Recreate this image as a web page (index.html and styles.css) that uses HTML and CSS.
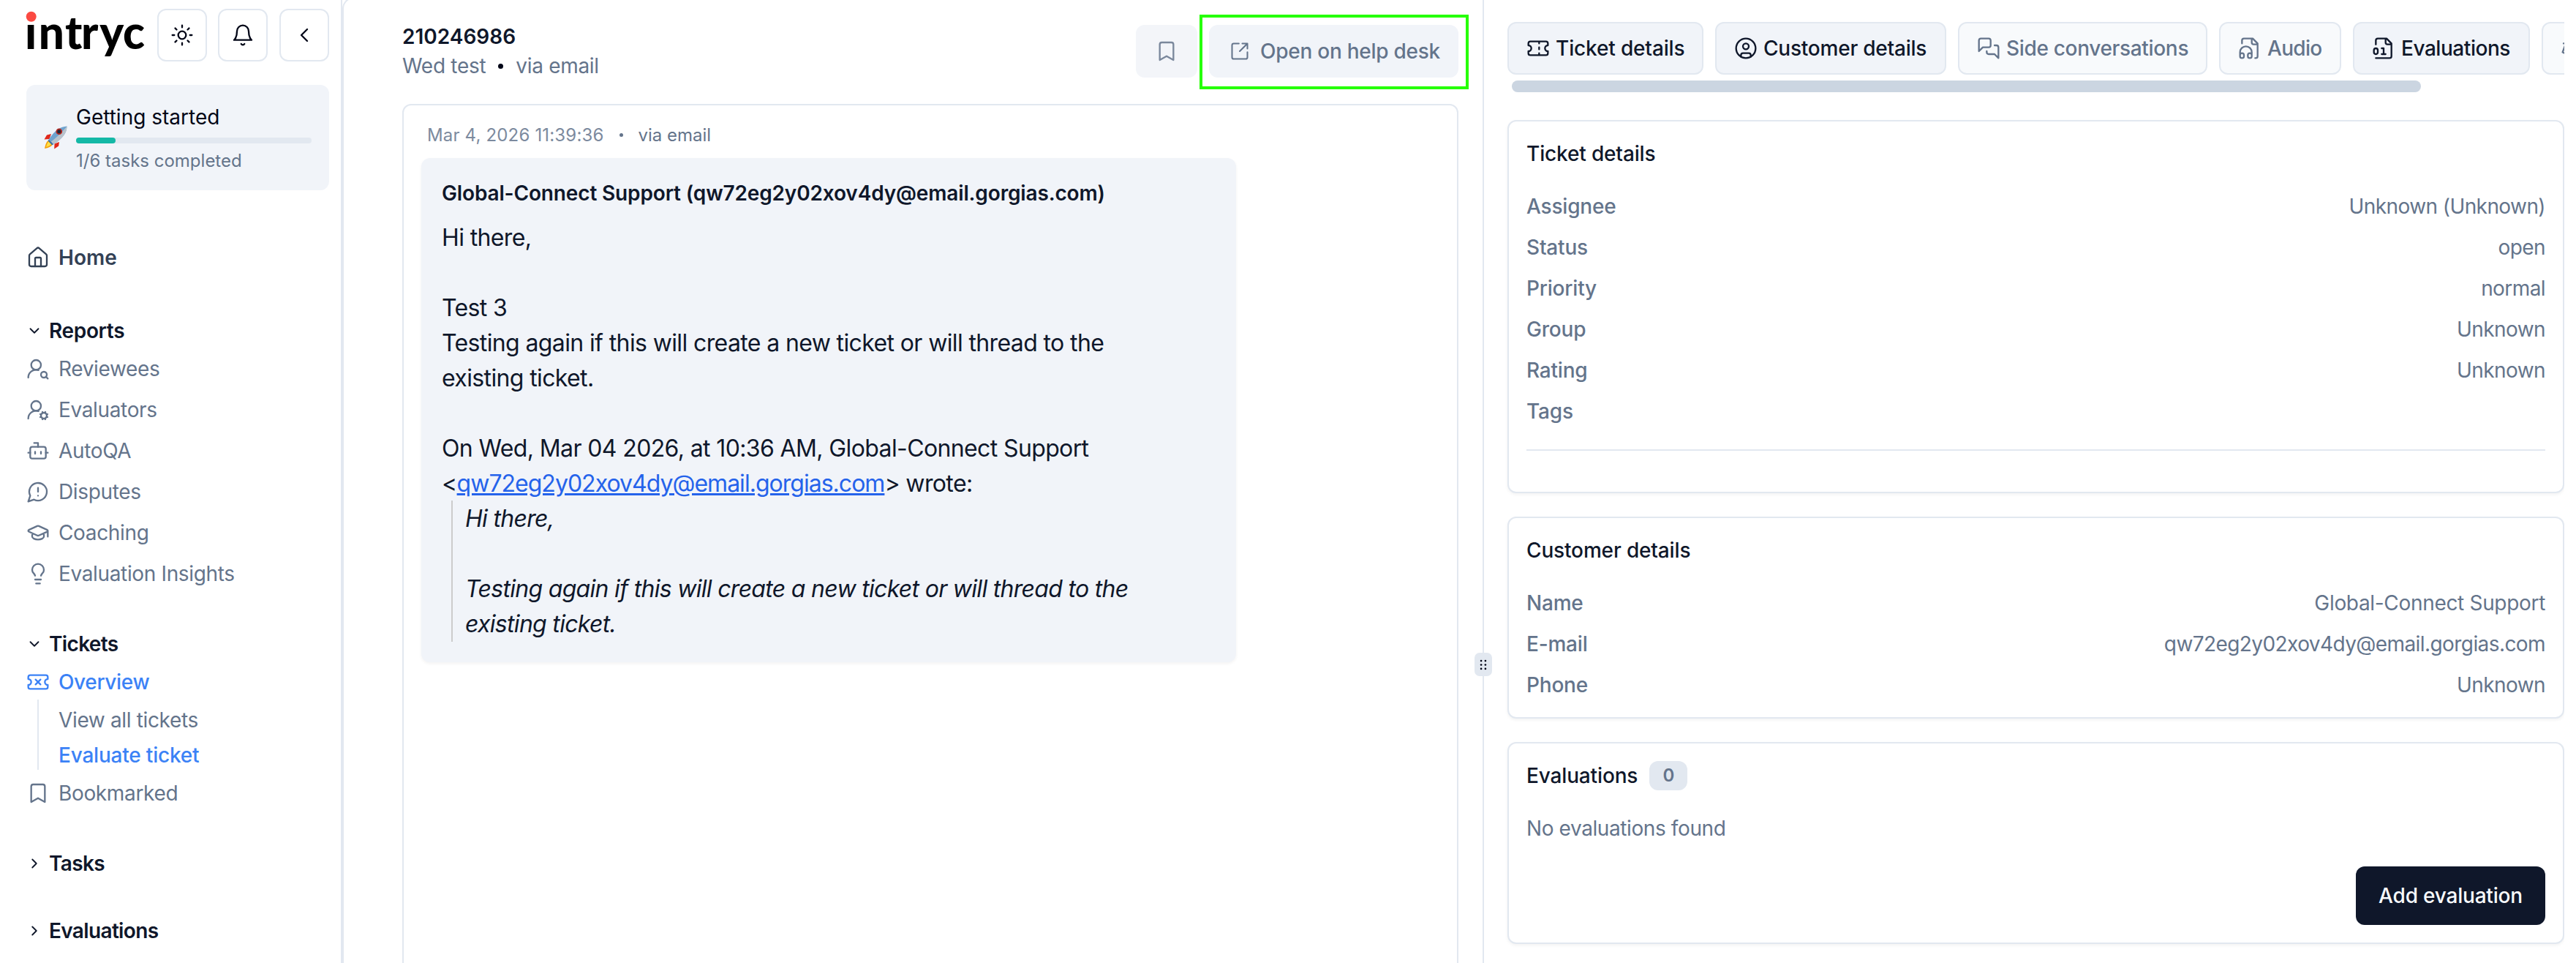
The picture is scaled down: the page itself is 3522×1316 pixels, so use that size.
FILE: index.html
```html
<!DOCTYPE html>
<html lang="en">
<head>
<meta charset="utf-8">
<title>intryc – Evaluate ticket</title>
<link rel="stylesheet" href="styles.css">
</head>
<body>
<aside class="sidebar">
  <div class="brand-row">
    <svg class="logo" viewBox="0 0 164 72" role="img" aria-label="intryc">
      <circle cx="6.7" cy="10.7" r="7" fill="#fb4a42"/>
      <text class="logo-text" x="-1.900 16.700 53 75 100.300 132" y="54.7">ıntryc</text>
    </svg>
    <div class="brand-actions">
      <button class="icon-btn" aria-label="Theme"><svg class="icon" viewBox="0 0 24 24"><circle cx="12" cy="12" r="4"/><path d="M12 2v2M12 20v2M4.93 4.93l1.41 1.41M17.66 17.66l1.41 1.41M2 12h2M20 12h2M6.34 17.66l-1.41 1.41M19.07 4.93l-1.41 1.41"/></svg></button>
      <button class="icon-btn" aria-label="Notifications"><svg class="icon" viewBox="0 0 24 24"><path d="M6 8a6 6 0 0 1 12 0c0 7 3 9 3 9H3s3-2 3-9M10.3 21a1.94 1.94 0 0 0 3.4 0"/></svg></button>
      <button class="icon-btn collapse" aria-label="Collapse"><svg class="icon" viewBox="0 0 24 24"><path d="m15 18-6-6 6-6"/></svg></button>
    </div>
  </div>

  <div class="onboarding">
    <svg class="rocket" viewBox="0 0 32 32">
      <path d="M10 11 4 12.5.5 18.5l7-.5zM21 22l-.8 5.500-6 4 .3-7z" fill="#e0281b"/>
      <path d="M6 20c-3 2-4 6-5 11 5-1 9-2.500 11-5.500z" fill="#f59e0b"/>
      <path d="M6.500 21.500c-2 2-2.600 4.500-3.500 7.500 3.200-.8 5.500-2 7.200-4z" fill="#fde047"/>
      <path d="M31.500.5C23 1 14.500 6 6.800 18.500l6.400 6.800C25 18 31.500 9.500 31.500.5z" fill="#6fa3cf"/>
      <path d="M31.500.5C27 6 19 15 9.800 21.700l3.400 3.600C25 18 31.500 9.500 31.500.5z" fill="#b9c3cc"/>
      <path d="M6.800 18.500l6.400 6.800-2 .9-5.600-5.700z" fill="#3b6fa8"/>
      <circle cx="20.800" cy="7.800" r="4.300" fill="#b3261e"/>
      <circle cx="20.800" cy="7.800" r="2.500" fill="#1e293b"/>
    </svg>
    <div class="onboarding-body">
      <div class="onboarding-title">Getting started</div>
      <div class="progress"><div class="progress-fill"></div></div>
      <div class="onboarding-note">1/6 tasks completed</div>
    </div>
  </div>

  <nav class="nav">
    <a class="nav-item home"><svg class="icon" viewBox="0 0 24 24"><path d="M15 21v-8a1 1 0 0 0-1-1h-4a1 1 0 0 0-1 1v8"/><path d="M3 10a2 2 0 0 1 .709-1.528l7-5.999a2 2 0 0 1 2.582 0l7 5.999A2 2 0 0 1 21 10v9a2 2 0 0 1-2 2H5a2 2 0 0 1-2-2z"/></svg>Home</a>

    <section class="nav-group reports">
      <h2 class="nav-heading"><svg class="chevron" viewBox="0 0 24 24"><path d="m6 9 6 6 6-6"/></svg>Reports</h2>
      <div class="nav-list">
        <a class="nav-item"><svg class="icon" viewBox="0 0 24 24"><circle cx="10" cy="8" r="5"/><path d="M2 21a8 8 0 0 1 10.434-7.62"/><circle cx="18" cy="18" r="3"/><path d="m22 22-1.900-1.900"/></svg>Reviewees</a>
        <a class="nav-item"><svg class="icon" viewBox="0 0 24 24"><path d="M2 21a8 8 0 0 1 10.434-7.62"/><circle cx="10" cy="8" r="5"/><circle cx="18" cy="18" r="3"/><path d="m19.500 14.300-.4.9M16.900 20.800l-.4.9M21.700 19.500l-.9-.4M15.200 16.900l-.9-.4M21.700 16.500l-.9.4M15.200 19.100l-.9.4M19.500 21.700l-.4-.9M16.900 15.200l-.4-.9"/></svg>Evaluators</a>
        <a class="nav-item"><svg class="icon" viewBox="0 0 24 24"><path d="M12 8V4H8"/><rect width="16" height="12" x="4" y="8" rx="2"/><path d="M2 14h2M20 14h2M15 13v2M9 13v2"/></svg>AutoQA</a>
        <a class="nav-item"><svg class="icon" viewBox="0 0 24 24"><path d="M7.900 20A9 9 0 1 0 4 16.100L2 22ZM12 8v4M12 16h.01"/></svg>Disputes</a>
        <a class="nav-item"><svg class="icon" viewBox="0 0 24 24"><path d="M21.420 10.922a1 1 0 0 0-.019-1.838L12.830 5.180a2 2 0 0 0-1.660 0L2.600 9.080a1 1 0 0 0 0 1.832l8.570 3.908a2 2 0 0 0 1.660 0zM22 10v6M6 12.500V16a6 3 0 0 0 12 0v-3.500"/></svg>Coaching</a>
        <a class="nav-item"><svg class="icon" viewBox="0 0 24 24"><path d="M15 14c.2-1 .7-1.700 1.500-2.500 1-.9 1.500-2.200 1.500-3.500A6 6 0 0 0 6 8c0 1 .2 2.200 1.500 3.500.7.7 1.300 1.500 1.500 2.500M9 18h6M10 22h4"/></svg>Evaluation Insights</a>
      </div>
    </section>

    <section class="nav-group tickets">
      <h2 class="nav-heading"><svg class="chevron" viewBox="0 0 24 24"><path d="m6 9 6 6 6-6"/></svg>Tickets</h2>
      <div class="nav-list">
        <div>
          <a class="nav-item active"><svg class="icon" viewBox="0 0 24 24"><path d="M2 9a3 3 0 0 1 0 6v2a2 2 0 0 0 2 2h16a2 2 0 0 0 2-2v-2a3 3 0 0 1 0-6V7a2 2 0 0 0-2-2H4a2 2 0 0 0-2 2ZM9.500 14.500l5-5M9.500 9.500l5 5"/></svg>Overview</a>
          <div class="subnav">
            <a class="subnav-item">View all tickets</a>
            <a class="subnav-item active">Evaluate ticket</a>
          </div>
        </div>
        <a class="nav-item"><svg class="icon" viewBox="0 0 24 24"><path d="m19 21-7-4-7 4V5a2 2 0 0 1 2-2h10a2 2 0 0 1 2 2v16z"/></svg>Bookmarked</a>
      </div>
    </section>

    <section class="nav-group tasks">
      <h2 class="nav-heading"><svg class="chevron" viewBox="0 0 24 24"><path d="m9 18 6-6-6-6"/></svg>Tasks</h2>
    </section>
    <section class="nav-group evaluations">
      <h2 class="nav-heading"><svg class="chevron" viewBox="0 0 24 24"><path d="m9 18 6-6-6-6"/></svg>Evaluations</h2>
    </section>
  </nav>
</aside>

<div class="workspace">
  <main class="conversation">
    <header class="conv-header">
      <div class="conv-heading">
        <h1 class="conv-id">210246986</h1>
        <div class="conv-sub"><span>Wed test</span><i class="dot"></i><span>via email</span></div>
      </div>
      <div class="conv-actions">
        <button class="soft-btn bookmark" aria-label="Bookmark"><svg class="icon" viewBox="0 0 24 24"><path d="m19 21-7-4-7 4V5a2 2 0 0 1 2-2h10a2 2 0 0 1 2 2v16z"/></svg></button>
        <button class="soft-btn help"><svg class="icon" viewBox="0 0 24 24"><path d="M21 13v6a2 2 0 0 1-2 2H5a2 2 0 0 1-2-2V5a2 2 0 0 1 2-2h6M21 3l-9 9M15 3h6v6"/></svg>Open on help desk<span class="highlight"></span></button>
      </div>
    </header>

    <div class="thread">
      <div class="msg-meta"><span class="msg-date">Mar 4, 2026 11:39:36</span><i class="dot small"></i><span>via email</span></div>
      <article class="bubble">
        <h3 class="bubble-from">Global-Connect Support (qw72eg2y02xov4dy@email.gorgias.com)</h3>
        <div class="bubble-body">Hi there,<br><br>Test 3<br>Testing again if this will create a new ticket or will thread to the<br>existing ticket.<br><br>On Wed, Mar 04 2026, at 10:36 AM, Global-Connect Support<br>&lt;<a class="mail" href="#">qw72eg2y02xov4dy@email.gorgias.com</a>&gt; wrote:
          <blockquote class="quote">Hi there,<br><br>Testing again if this will create a new ticket or will thread to the<br>existing ticket.</blockquote>
        </div>
      </article>
    </div>
  </main>

  <div class="divider"><div class="grip"><svg class="grip-dots" viewBox="0 0 12 20"><circle cx="2.500" cy="3.500" r="1.600"/><circle cx="9.500" cy="3.500" r="1.600"/><circle cx="2.500" cy="10" r="1.600"/><circle cx="9.500" cy="10" r="1.600"/><circle cx="2.500" cy="16.500" r="1.600"/><circle cx="9.500" cy="16.500" r="1.600"/></svg></div></div>

  <aside class="details">
    <div class="tabs">
      <button class="tab on ticket"><svg class="icon" viewBox="0 0 24 24"><path d="M2 9a3 3 0 0 1 0 6v2a2 2 0 0 0 2 2h16a2 2 0 0 0 2-2v-2a3 3 0 0 1 0-6V7a2 2 0 0 0-2-2H4a2 2 0 0 0-2 2ZM13 5v2M13 17v2M13 11v2"/></svg>Ticket details</button>
      <button class="tab on customer"><svg class="icon" viewBox="0 0 24 24"><circle cx="12" cy="12" r="10"/><circle cx="12" cy="10" r="3"/><path d="M7 20.662V19a2 2 0 0 1 2-2h6a2 2 0 0 1 2 2v1.662"/></svg>Customer details</button>
      <button class="tab side"><svg class="icon" viewBox="0 0 24 24"><path d="M14 9a2 2 0 0 1-2 2H6l-4 4V4a2 2 0 0 1 2-2h8a2 2 0 0 1 2 2zM18 9h2a2 2 0 0 1 2 2v11l-4-4h-6a2 2 0 0 1-2-2v-1"/></svg>Side conversations</button>
      <button class="tab audio"><svg class="icon" viewBox="0 0 24 24"><path d="M17.500 22h.5a2 2 0 0 0 2-2V7l-5-5H6a2 2 0 0 0-2 2v3M14 2v4a2 2 0 0 0 2 2h4M2 19a2 2 0 1 1 4 0v1a2 2 0 1 1-4 0v-4a6 6 0 0 1 12 0v4a2 2 0 1 1-4 0v-1a2 2 0 1 1 4 0"/></svg>Audio</button>
      <button class="tab on evals"><svg class="icon" viewBox="0 0 24 24"><path d="M4 22h14a2 2 0 0 0 2-2V7l-5-5H6a2 2 0 0 0-2 2v4M14 2v4a2 2 0 0 0 2 2h4M10 12h2v6M10 18h4"/><rect width="4" height="6" x="2" y="12" rx="2"/></svg>Evaluations</button>
      <button class="tab" aria-label="Disputes"><svg class="icon" viewBox="0 0 24 24"><path d="m16 16 3-8 3 8c-.87.65-1.920 1-3 1s-2.130-.35-3-1ZM2 16l3-8 3 8c-.87.65-1.920 1-3 1s-2.130-.35-3-1ZM7 21h10M12 3v18M3 7h2c2 0 5-1 7-2 2 1 5 2 7 2h2"/></svg></button>
    </div>
    <div class="tab-scroll"></div>

    <section class="card ticket-card">
      <h2 class="card-title">Ticket details</h2>
      <dl class="fields">
        <div class="field"><dt>Assignee</dt><dd>Unknown (Unknown)</dd></div>
        <div class="field"><dt>Status</dt><dd>open</dd></div>
        <div class="field"><dt>Priority</dt><dd>normal</dd></div>
        <div class="field"><dt>Group</dt><dd>Unknown</dd></div>
        <div class="field"><dt>Rating</dt><dd>Unknown</dd></div>
        <div class="field"><dt>Tags</dt><dd></dd></div>
      </dl>
      <hr class="rule">
    </section>

    <section class="card customer-card">
      <h2 class="card-title">Customer details</h2>
      <dl class="fields">
        <div class="field"><dt>Name</dt><dd class="name">Global-Connect Support</dd></div>
        <div class="field"><dt>E-mail</dt><dd>qw72eg2y02xov4dy@email.gorgias.com</dd></div>
        <div class="field"><dt>Phone</dt><dd>Unknown</dd></div>
      </dl>
    </section>

    <section class="card eval-card">
      <h2 class="card-title">Evaluations<span class="count">0</span></h2>
      <p class="empty">No evaluations found</p>
      <button class="primary-btn">Add evaluation</button>
    </section>
  </aside>
</div>
</body>
</html>
```

FILE: styles.css
```css
* { box-sizing: border-box; margin: 0; padding: 0; }

body {
  display: flex;
  width: 3522px;
  height: 1316px;
  overflow: hidden;
  background: #fff;
  color: #0f172a;
  font-family: Inter, "Liberation Sans", sans-serif;
  font-size: 28px;
  line-height: 40px;
}

button { border: 0; background: none; font: inherit; color: inherit; white-space: nowrap; }
h1, h2, h3 { font: inherit; }

.icon {
  flex: none;
  width: 32px;
  height: 32px;
  fill: none;
  stroke: currentColor;
  stroke-width: 1.75;
  stroke-linecap: round;
  stroke-linejoin: round;
}

/* Sidebar */
.sidebar {
  flex: none;
  width: 468px;
  height: 1316px;
  padding: 12px 16px 0 36px;
  border-right: 2px solid #e2e8f0;
  overflow: hidden;
}
.brand-row { display: flex; justify-content: space-between; }
.logo { flex: none; width: 164px; height: 72px; overflow: visible; }
.logo-text { font-family: Lato, sans-serif; font-weight: 900; font-size: 62px; fill: #000; }
.brand-actions { display: flex; gap: 15px; }
.icon-btn {
  display: flex;
  align-items: center;
  justify-content: center;
  width: 68px;
  height: 72px;
  border: 2px solid #e2e8f0;
  border-radius: 12px;
  color: #020617;
}
.icon-btn.collapse { margin-left: 1px; }

.onboarding {
  display: flex;
  align-items: center;
  gap: 12px;
  height: 144px;
  margin-top: 32px;
  padding: 0 24px;
  border-radius: 12px;
  background: #f1f4f9;
}
.rocket { flex: none; width: 32px; height: 32px; }
.onboarding-body { flex: 1; }
.onboarding-title { color: #020617; }
.progress { height: 8px; margin: 8px 0; border-radius: 4px; background: #e2e8f0; }
.progress-fill { width: 16.800%; height: 8px; border-radius: 4px; background: #14b8a6; }
.onboarding-note { font-size: 24px; line-height: 32px; color: #64748b; }

.nav { margin-top: 68px; letter-spacing: -.35px; }
.nav-item {
  display: flex;
  align-items: center;
  gap: 12px;
  height: 48px;
  color: #64748b;
}
.nav-item.home { font-weight: 600; color: #334155; letter-spacing: 0; }
.nav-item.active, .subnav-item.active { font-weight: 500; color: #3b82f6; }
.nav-heading {
  display: flex;
  align-items: center;
  gap: 9px;
  height: 48px;
  font-weight: 600;
}
.chevron {
  flex: none;
  width: 22px;
  height: 22px;
  fill: none;
  stroke: currentColor;
  stroke-width: 2;
  stroke-linecap: round;
  stroke-linejoin: round;
}
.nav-list { display: flex; flex-direction: column; gap: 8px; margin-top: 4px; }
.reports { margin-top: 52px; }
.tickets, .tasks { margin-top: 48px; }
.tickets .nav-heading, .tasks .nav-heading, .evaluations .nav-heading { letter-spacing: -.65px; }
.evaluations { margin-top: 44px; }
.subnav {
  display: flex;
  flex-direction: column;
  gap: 8px;
  margin-left: 15px;
  padding: 8px 0 0 27px;
  border-left: 2px solid #e2e8f0;
}
.subnav-item { height: 40px; color: #64748b; }
.subnav-item.active { letter-spacing: -.2px; }

/* Workspace */
.workspace {
  display: flex;
  flex: 1;
  height: 1340px;
  margin-top: -4px;
  padding-top: 2px;
  border: 2px solid #e2e8f0;
  border-right: 0;
  border-radius: 16px 0 0 16px;
}
.conversation {
  display: flex;
  flex-direction: column;
  flex: none;
  width: 1557px;
  padding: 30px 33px 0 80px;
}
.conv-header { display: flex; justify-content: space-between; height: 112px; }
.conv-id { font-weight: 600; }
.conv-sub { display: flex; align-items: center; color: #64748b; letter-spacing: -.3px; }
.dot { width: 7px; height: 7px; margin: 0 17px; border-radius: 50%; background: #020617; }
.dot.small { width: 5px; height: 5px; margin: 0 21px; background: #64748b; }

.conv-actions { display: flex; gap: 16px; margin-top: 4px; }
.soft-btn {
  display: flex;
  align-items: center;
  justify-content: center;
  position: relative;
  height: 72px;
  border-radius: 12px;
  background: #f1f4f9;
  color: #64748b;
  font-weight: 500;
}
.soft-btn.bookmark { width: 84px; opacity: .85; }
.soft-btn.help {
  justify-content: flex-start;
  gap: 14px;
  width: 341px;
  padding-left: 28px;
  letter-spacing: -.26px;
}
.soft-btn.help .icon { width: 28px; height: 28px; }
.highlight {
  position: absolute;
  inset: -14px -14px -16px -13px;
  border: 4px solid #26ff00;
}

.thread {
  flex: 1;
  padding: 20px 24px;
  border: 2px solid #e2e8f0;
  border-radius: 12px;
}
.msg-meta {
  display: flex;
  align-items: center;
  height: 40px;
  padding: 1px 0 0 8px;
  font-size: 24px;
  color: #64748b;
}
.msg-date { color: #7c8a9e; letter-spacing: .17px; }
.bubble {
  width: 1114px;
  height: 689px;
  margin-top: 12px;
  padding: 28px;
  border-radius: 12px;
  background: #f1f4f9;
  box-shadow: 0 2px 4px rgba(0, 0, 0, .05);
}
.bubble-from { margin-bottom: 17px; font-weight: 600; letter-spacing: -.15px; }
.bubble-body { font-size: 32px; line-height: 48px; letter-spacing: -.62px; white-space: nowrap; }
.mail { color: #2563eb; letter-spacing: -.98px; }
.quote {
  margin: -1px 0 0 13px;
  padding: 1px 0 0 17px;
  border-left: 2px solid #ccc;
  font-style: italic;
  letter-spacing: -.7px;
}

.divider { position: relative; flex: none; width: 2px; background: #e2e8f0; }
.grip {
  position: absolute;
  left: -11px;
  top: 892px;
  display: flex;
  align-items: center;
  justify-content: center;
  width: 24px;
  height: 32px;
  border-radius: 7px;
  background: #e2e8f0;
}
.grip-dots { width: 10px; height: 17px; fill: #020617; }

/* Details */
.details { flex: none; width: 1477px; padding: 30px 0 0 32px; overflow: hidden; }
.tabs { display: flex; gap: 16px; height: 72px; overflow: hidden; }
.tab {
  display: flex;
  flex: none;
  align-items: center;
  gap: 8px;
  height: 72px;
  padding: 0 24px;
  border: 2px solid #e2e8f0;
  border-radius: 12px;
  background: #f8fafc;
  color: #64748b;
  font-weight: 500;
}
.tab.on { background: #f1f4f9; color: #0f172a; }
.tab.ticket { width: 268px; letter-spacing: -.15px; }
.tab.customer { width: 316px; letter-spacing: -.22px; }
.tab.side { width: 341px; letter-spacing: -.33px; }
.tab.audio { width: 167px; letter-spacing: -.7px; }
.tab.evals { width: 242px; letter-spacing: -.45px; }
.tab-scroll { width: 1243px; height: 16px; margin: 8px 0 0 6px; border-radius: 8px; background: #cbd5e1; }

.card {
  display: flex;
  flex-direction: column;
  padding: 24px;
  border: 2px solid #e2e8f0;
  border-radius: 12px;
  background: #fff;
  box-shadow: 0 2px 4px rgba(0, 0, 0, .05);
}
.ticket-card { height: 510px; margin-top: 38px; }
.customer-card { height: 276px; margin-top: 32px; }
.eval-card { height: 276px; margin-top: 32px; }
.card-title {
  display: flex;
  align-items: center;
  gap: 16px;
  height: 40px;
  font-weight: 500;
  letter-spacing: -.15px;
}
.fields { display: flex; flex-direction: column; gap: 16px; margin-top: 32px; }
.field { display: flex; justify-content: space-between; height: 40px; color: #64748b; letter-spacing: -.58px; }
.field dt { font-weight: 500; letter-spacing: -.2px; }
.field .name { letter-spacing: -.32px; }
.rule { height: 2px; margin-top: 32px; border: 0; background: #e2e8f0; }
.count {
  display: flex;
  align-items: center;
  justify-content: center;
  width: 52px;
  height: 40px;
  border-radius: 12px;
  background: #e2e8f0;
  color: #64748b;
  font-size: 24px;
  font-weight: 600;
}
.empty { margin-top: 32px; color: #64748b; letter-spacing: -.4px; }
.primary-btn {
  align-self: flex-end;
  width: 259px;
  height: 80px;
  margin-top: 32px;
  border-radius: 12px;
  background: #0f172a;
  color: #f8fafc;
  font-weight: 500;
  letter-spacing: -.2px;
}
```
